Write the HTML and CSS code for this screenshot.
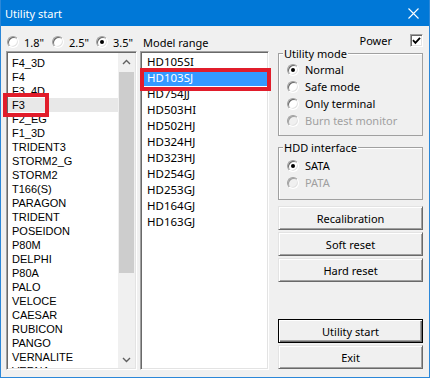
FILE: index.html
```html
<!DOCTYPE html>
<html lang="en">
<head>
    <meta charset="UTF-8">
    <title>Utility start</title>
    <link rel="stylesheet" href="styles.css">
</head>
<body>
<div class="window">
    <div class="titlebar">
        <span class="title">Utility start</span>
        <svg class="close" width="11" height="11" viewBox="0 0 11 11">
            <path d="M0.5 0.5 L10.5 10.5 M10.5 0.5 L0.5 10.5" stroke="#fff" stroke-width="1.1" fill="none"/>
        </svg>
    </div>
    <div class="content">
        <div class="col-left">
            <div class="size-row">
                <label class="opt"><span class="radio"></span>1.8"</label>
                <label class="opt"><span class="radio"></span>2.5"</label>
                <label class="opt"><span class="radio checked"></span>3.5"</label>
            </div>
            <div class="listbox">
                <ul class="items families">
                    <li>F4_3D</li>
                    <li>F4</li>
                    <li>F3_4D</li>
                    <li class="hover">F3</li>
                    <li>F2_EG</li>
                    <li>F1_3D</li>
                    <li>TRIDENT3</li>
                    <li>STORM2_G</li>
                    <li>STORM2</li>
                    <li>T166(S)</li>
                    <li>PARAGON</li>
                    <li>TRIDENT</li>
                    <li>POSEIDON</li>
                    <li>P80M</li>
                    <li>DELPHI</li>
                    <li>P80A</li>
                    <li>PALO</li>
                    <li>VELOCE</li>
                    <li>CAESAR</li>
                    <li>RUBICON</li>
                    <li>PANGO</li>
                    <li>VERNALITE</li>
                    <li>VERNA</li>
                </ul>
                <div class="scrollbar">
                    <div class="sb-btn">
                        <svg width="9" height="6" viewBox="0 0 9 6"><path d="M1 5 L4.5 1.5 L8 5" stroke="#606060" stroke-width="1.4" fill="none"/></svg>
                    </div>
                    <div class="sb-track"><div class="sb-thumb"></div></div>
                    <div class="sb-btn">
                        <svg width="9" height="6" viewBox="0 0 9 6"><path d="M1 1 L4.5 4.5 L8 1" stroke="#606060" stroke-width="1.4" fill="none"/></svg>
                    </div>
                </div>
            </div>
        </div>

        <div class="col-mid">
            <div class="size-row">Model range</div>
            <div class="listbox">
                <ul class="items models">
                    <li>HD105SI</li>
                    <li class="selected">HD103SJ</li>
                    <li>HD754JJ</li>
                    <li>HD503HI</li>
                    <li>HD502HJ</li>
                    <li>HD324HJ</li>
                    <li>HD323HJ</li>
                    <li>HD254GJ</li>
                    <li>HD253GJ</li>
                    <li>HD164GJ</li>
                    <li>HD163GJ</li>
                </ul>
            </div>
        </div>

        <div class="col-right">
            <div class="power-row">
                <span>Power</span>
                <span class="checkbox">
                    <svg width="9" height="9" viewBox="0 0 9 9"><path d="M1 4.2 L3.4 6.8 L8 1.8" stroke="#000" stroke-width="1.8" fill="none"/></svg>
                </span>
            </div>
            <fieldset class="group">
                <legend>Utility mode</legend>
                <label class="opt row"><span class="radio checked"></span>Normal</label>
                <label class="opt row"><span class="radio"></span>Safe mode</label>
                <label class="opt row"><span class="radio"></span>Only terminal</label>
                <label class="opt row disabled"><span class="radio"></span>Burn test monitor</label>
            </fieldset>
            <fieldset class="group hdd">
                <legend>HDD interface</legend>
                <label class="opt row"><span class="radio checked"></span>SATA</label>
                <label class="opt row disabled"><span class="radio"></span>PATA</label>
            </fieldset>
            <button class="btn first">Recalibration</button>
            <button class="btn">Soft reset</button>
            <button class="btn">Hard reset</button>
            <button class="btn default push">Utility start</button>
            <button class="btn">Exit</button>
        </div>
    </div>

    <div class="mark mark-family"></div>
    <div class="mark mark-model"></div>
</div>
</body>
</html>
```

FILE: styles.css
```css
body {
    margin: 0;
    font-family: "Noto Sans", sans-serif;
    font-size: 11px;
    color: #000;
    background-color: #f0f0f0;
}
.window {
    position: relative;
    width: 430px;
    height: 378px;
    box-sizing: border-box;
    border: 1px solid #2b87d8;
    border-top: none;
    background-color: #f0f0f0;
    display: flex;
    flex-direction: column;
}
.titlebar {
    height: 26px;
    flex-shrink: 0;
    background-color: #0078d7;
    color: #fff;
    display: flex;
    align-items: center;
    justify-content: space-between;
    padding: 0 10px 0 4px;
}
.title {
    font-size: 11px;
}
.content {
    flex: 1;
    display: flex;
    padding: 7px 6px 7px 5px;
    min-height: 0;
}
.col-left {
    width: 131px;
    margin-right: 3px;
    display: flex;
    flex-direction: column;
}
.col-mid {
    width: 129px;
    margin-right: 9px;
    display: flex;
    flex-direction: column;
}
.col-right {
    width: 145px;
    display: flex;
    flex-direction: column;
    padding-bottom: 1px;
}
.size-row {
    height: 18px;
    flex-shrink: 0;
    display: flex;
    align-items: center;
    white-space: nowrap;
}
.col-mid .size-row {
    padding-left: 3px;
}
.opt {
    display: inline-flex;
    align-items: center;
    gap: 5px;
    margin-right: 7px;
    margin-left: 1px;
    white-space: nowrap;
}
.opt:nth-child(3) {
    margin-left: 0;
}
.radio {
    width: 12px;
    height: 12px;
    box-sizing: border-box;
    border-radius: 50%;
    border: 1px solid;
    border-color: #a0a0a0 #fff #fff #a0a0a0;
    box-shadow: inset 1px 1px 0 #696969, inset -1px -1px 0 #e3e3e3;
    background-color: #fff;
    display: flex;
    align-items: center;
    justify-content: center;
    flex-shrink: 0;
}
.radio.checked::after {
    content: "";
    width: 4px;
    height: 4px;
    border-radius: 50%;
    background-color: #000;
}
.disabled {
    color: #a0a0a0;
}
.disabled .radio {
    background-color: #f0f0f0;
    box-shadow: inset 1px 1px 0 #a0a0a0, inset -1px -1px 0 #e3e3e3;
}
.listbox {
    flex: 1;
    min-height: 0;
    display: flex;
    border: 1px solid;
    border-color: #a0a0a0 #fff #fff #a0a0a0;
    box-shadow: inset 1px 1px 0 #696969, inset -1px -1px 0 #e3e3e3;
    padding: 1px;
    background-color: #fff;
    overflow: hidden;
}
.items {
    flex: 1;
    list-style: none;
    margin: 0;
    overflow: hidden;
    white-space: nowrap;
}
.families {
    padding: 3px 0 0 0;
    font-family: "Liberation Sans", Arial, sans-serif;
    font-size: 11px;
}
.families li {
    height: 14px;
    line-height: 14px;
    padding-left: 4px;
}
.models {
    padding: 1px 0 0 0;
    font-size: 11.5px;
}
.models li {
    height: 16px;
    line-height: 16px;
    padding-left: 5px;
}
.hover {
    background-color: #e8e8e8;
}
.selected {
    background-color: #3399ff;
    color: #fff;
}
.scrollbar {
    width: 17px;
    flex-shrink: 0;
    background-color: #f0f0f0;
    display: flex;
    flex-direction: column;
}
.sb-btn {
    height: 17px;
    flex-shrink: 0;
    display: flex;
    align-items: center;
    justify-content: center;
}
.sb-track {
    flex: 1;
    padding: 2px 1px 0 1px;
}
.sb-thumb {
    height: 201px;
    background-color: #cdcdcd;
}
.power-row {
    height: 15px;
    flex-shrink: 0;
    display: flex;
    align-items: center;
    justify-content: flex-end;
    gap: 18px;
}
.checkbox {
    width: 13px;
    height: 13px;
    box-sizing: border-box;
    border: 1px solid;
    border-color: #a0a0a0 #fff #fff #a0a0a0;
    box-shadow: inset 1px 1px 0 #696969, inset -1px -1px 0 #e3e3e3;
    background-color: #fff;
    display: flex;
    align-items: center;
    justify-content: center;
}
.group {
    margin: -2px 0 0 0;
    padding: 0 8px 6px 8px;
    border: 1px solid #a0a0a0;
    box-shadow: inset 1px 1px 0 #fff;
    min-width: 0;
    display: flex;
    flex-direction: column;
}
.group legend {
    margin-left: -4px;
    padding: 0 1px;
    line-height: 15px;
    background-color: #f0f0f0;
}
.group.hdd {
    margin-top: 4px;
    padding-top: 2px;
    padding-bottom: 8px;
}
.row {
    height: 17px;
    margin: 0;
    gap: 6px;
}
.btn {
    height: 24px;
    margin-top: 2px;
    flex-shrink: 0;
    font-family: "Noto Sans", sans-serif;
    font-size: 11px;
    color: #000;
    background-color: #f0f0f0;
    border: 1px solid;
    border-color: #e3e3e3 #696969 #696969 #e3e3e3;
    box-shadow: inset 1px 1px 0 #fff, inset -1px -1px 0 #a0a0a0;
    padding: 0;
}
.btn.first {
    margin-top: 6px;
}
.btn.push {
    margin-top: auto;
}
.btn.default {
    border-color: #000;
    box-shadow: inset 1px 1px 0 #fff, inset -1px -1px 0 #696969, inset -2px -2px 0 #a0a0a0;
}
.mark {
    position: absolute;
    box-sizing: border-box;
    border: 4px solid #e11d2b;
}
.mark-family {
    left: 2px;
    top: 93px;
    width: 46px;
    height: 24px;
}
.mark-model {
    left: 139px;
    top: 68px;
    width: 131px;
    height: 23px;
}
```
